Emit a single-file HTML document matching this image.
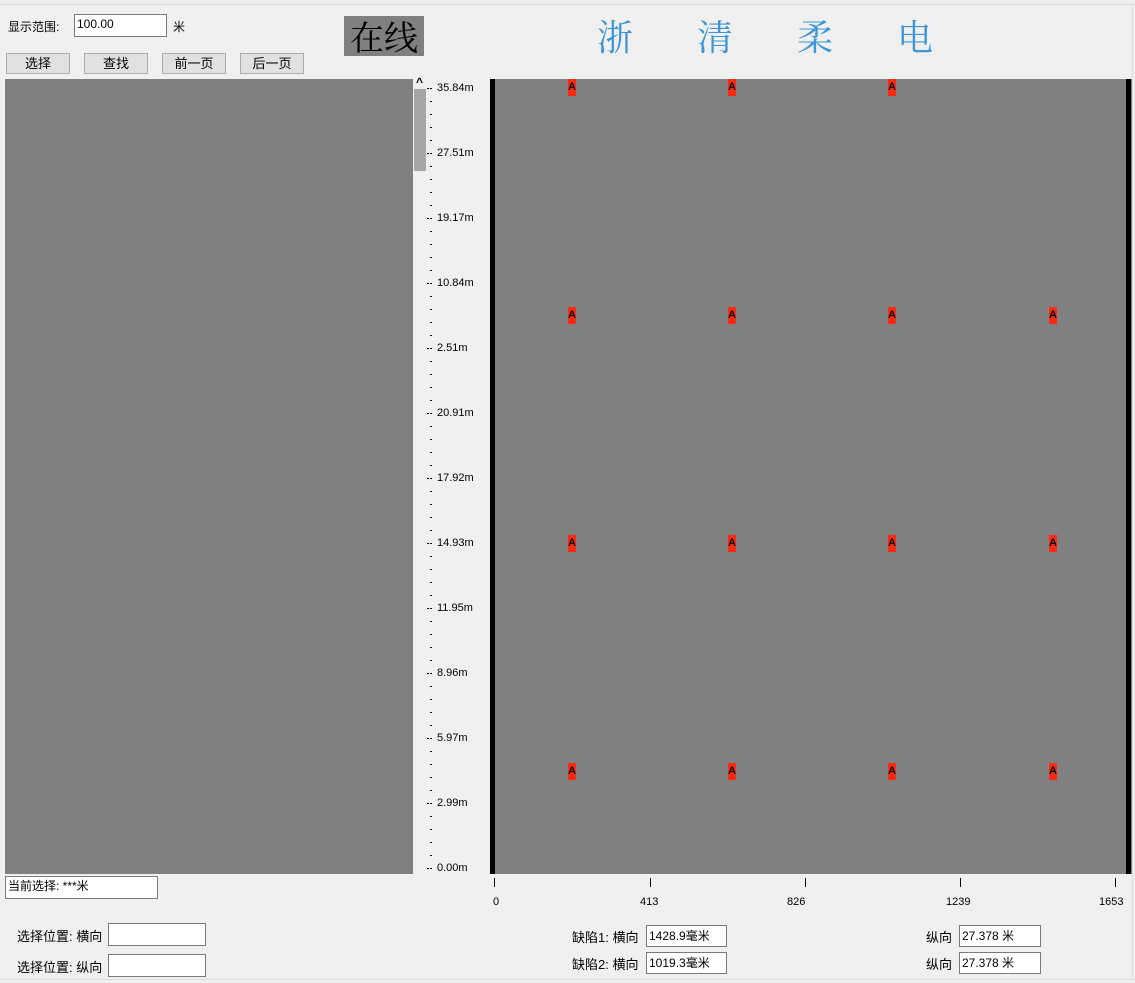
<!DOCTYPE html>
<html><head><meta charset="utf-8"><style>
body{margin:0;width:1135px;height:983px;background:#f0f0f0;position:relative;overflow:hidden;font-family:"Liberation Sans","Noto Sans CJK SC",sans-serif;font-size:12px;color:#000}
.a{position:absolute}
.box{position:absolute;background:#fff;border:1px solid #7a7a7a;box-sizing:border-box;font-size:12px;line-height:20px;padding-left:2px;white-space:nowrap}
.btn{position:absolute;top:53px;width:64px;height:21px;background:#e1e1e1;border:1px solid #adadad;box-sizing:border-box;text-align:center;line-height:19px;font-size:13px}
.lbl{position:absolute;left:437px;font-size:11px;line-height:12px}
.mk{position:absolute;width:8px;height:17px;background:#ff2a12;font-size:11px;font-weight:bold;line-height:17px;text-align:center}
.tk{position:absolute;top:878px;width:1px;height:9px;background:#000}
.tl{position:absolute;top:896px;font-size:11px}
.t{position:absolute;top:14px;font-size:36px;color:#3d94d8;font-family:"Noto Serif CJK SC",serif;line-height:44px}
</style></head><body>
<div class="a" style="left:0;top:4px;width:1135px;height:1px;background:#dcdcdc"></div>
<div class="a" style="left:0;top:979px;width:1135px;height:1px;background:#dcdcdc"></div>
<div class="a" style="left:1132px;top:4px;width:1px;height:976px;background:#dcdcdc"></div>
<div class="a" style="left:8px;top:18px;font-size:12px">显示范围:</div>
<div class="box" style="left:74px;top:14px;width:93px;height:23px;line-height:18px">100.00</div>
<div class="a" style="left:173px;top:18px">米</div>
<div class="btn" style="left:6px">选择</div>
<div class="btn" style="left:84px">查找</div>
<div class="btn" style="left:162px">前一页</div>
<div class="btn" style="left:240px">后一页</div>
<div class="a" style="left:344px;top:16px;width:80px;height:40px;background:#808080;font-family:'Noto Serif CJK SC',serif;font-size:34px;line-height:40px;text-align:center;color:#000">在线</div>
<div class="t" style="left:597px">浙</div><div class="t" style="left:697px">清</div><div class="t" style="left:797px">柔</div><div class="t" style="left:897px">电</div>

<div class="a" style="left:5px;top:79px;width:408px;height:795px;background:#808080"></div>
<div class="a" style="left:413px;top:79px;width:14px;height:795px;background:#f0f0f0"></div>
<div class="a" style="left:414px;top:89px;width:12px;height:82px;background:#a6a6a6"></div>
<div class="a" style="left:416px;top:75px;font-size:12px;font-weight:bold">^</div>
<div class="a" style="left:430px;top:88px;width:2px;height:782px;background:repeating-linear-gradient(#000 0 1px,transparent 1px 13px)"></div>
<div class="a" style="left:427px;top:88px;width:2px;height:782px;background:repeating-linear-gradient(#000 0 1px,transparent 1px 65px)"></div>
<div class="lbl" style="top:82px">35.84m</div>
<div class="lbl" style="top:147px">27.51m</div>
<div class="lbl" style="top:212px">19.17m</div>
<div class="lbl" style="top:277px">10.84m</div>
<div class="lbl" style="top:342px">2.51m</div>
<div class="lbl" style="top:407px">20.91m</div>
<div class="lbl" style="top:472px">17.92m</div>
<div class="lbl" style="top:537px">14.93m</div>
<div class="lbl" style="top:602px">11.95m</div>
<div class="lbl" style="top:667px">8.96m</div>
<div class="lbl" style="top:732px">5.97m</div>
<div class="lbl" style="top:797px">2.99m</div>
<div class="lbl" style="top:862px">0.00m</div>

<div class="a" style="left:490px;top:79px;width:642px;height:795px;background:#808080"></div>
<div class="a" style="left:490px;top:79px;width:5px;height:795px;background:#000"></div>
<div class="a" style="left:1126px;top:79px;width:5px;height:795px;background:#000"></div>
<div class="mk" style="left:568px;top:79px">A</div><div class="mk" style="left:728px;top:79px">A</div><div class="mk" style="left:888px;top:79px">A</div>
<div class="mk" style="left:568px;top:307px">A</div><div class="mk" style="left:728px;top:307px">A</div><div class="mk" style="left:888px;top:307px">A</div><div class="mk" style="left:1049px;top:307px">A</div>
<div class="mk" style="left:568px;top:535px">A</div><div class="mk" style="left:728px;top:535px">A</div><div class="mk" style="left:888px;top:535px">A</div><div class="mk" style="left:1049px;top:535px">A</div>
<div class="mk" style="left:568px;top:763px">A</div><div class="mk" style="left:728px;top:763px">A</div><div class="mk" style="left:888px;top:763px">A</div><div class="mk" style="left:1049px;top:763px">A</div>

<div class="tk" style="left:494px"></div><div class="tk" style="left:650px"></div><div class="tk" style="left:805px"></div><div class="tk" style="left:960px"></div><div class="tk" style="left:1115px"></div>
<div class="tl" style="left:493px">0</div><div class="tl" style="left:640px">413</div><div class="tl" style="left:787px">826</div><div class="tl" style="left:946px">1239</div><div class="tl" style="left:1099px">1653</div>

<div class="box" style="left:5px;top:876px;width:153px;height:23px;line-height:19px">当前选择: ***米</div>
<div class="a" style="left:17px;top:926px;font-size:13px">选择位置: 横向</div>
<div class="box" style="left:108px;top:923px;width:98px;height:23px"></div>
<div class="a" style="left:17px;top:957px;font-size:13px">选择位置: 纵向</div>
<div class="box" style="left:108px;top:954px;width:98px;height:23px"></div>

<div class="a" style="left:572px;top:927px;font-size:13px">缺陷1: 横向</div>
<div class="box" style="left:646px;top:925px;width:81px;height:22px">1428.9毫米</div>
<div class="a" style="left:572px;top:954px;font-size:13px">缺陷2: 横向</div>
<div class="box" style="left:646px;top:952px;width:81px;height:22px">1019.3毫米</div>
<div class="a" style="left:926px;top:927px;font-size:13px">纵向</div>
<div class="box" style="left:959px;top:925px;width:82px;height:22px">27.378 米</div>
<div class="a" style="left:926px;top:954px;font-size:13px">纵向</div>
<div class="box" style="left:959px;top:952px;width:82px;height:22px">27.378 米</div>
</body></html>
